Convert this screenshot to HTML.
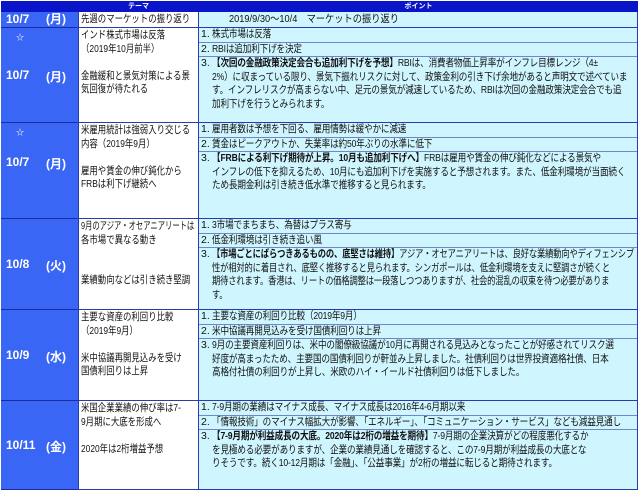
<!DOCTYPE html>
<html><head><meta charset="utf-8"><style>
*{margin:0;padding:0;box-sizing:border-box}
body{width:640px;height:493px;background:#fff;font-family:"Liberation Sans","Noto Sans CJK JP",sans-serif;position:relative;overflow:hidden;color:#111}
.a{position:absolute;overflow:hidden}
.hd{background:#0a14c8;color:#fff;font-size:7px;font-weight:bold;text-align:center;line-height:11px;top:1px;height:11px}
.dt{background:#3a66f5;left:1px;width:77px;border-bottom:1px solid #1a2aa0;color:#fff;font-weight:bold;font-size:12px}
.dt .d{position:absolute;left:5px}
.dt .w{position:absolute;left:45px}
.dt .s{position:absolute;left:15px;top:4px;font-size:8px;font-weight:normal}
.th{background:#fff;left:78px;width:121px;border:1px solid #2a3ab0;border-top:none;font-size:10.5px;line-height:13.5px;padding:1px 2px;white-space:nowrap}
.th .in{display:block;width:150px;transform:scaleX(0.8);transform-origin:0 0}
.pt{background:#cff6ff;left:199px;width:439px;border-bottom:1px solid #2a3ab0;border-right:1px solid #2a3ab0;font-size:10.5px;line-height:13.5px}
.it{border-bottom:1px solid #6f86cc;white-space:nowrap;position:relative;padding-left:13px}
.it:last-child{border-bottom:none}
.it .n{position:absolute;left:2px}
.it .in{display:block;width:540px;transform:scaleX(0.82);transform-origin:0 0;letter-spacing:-0.2px}
b{font-weight:bold}
</style></head><body>
<div class="a hd" style="left:1px;width:77px"></div>
<div class="a hd" style="left:78px;width:121px">テーマ</div>
<div class="a hd" style="left:199px;width:439px">ポイント</div>

<div class="a dt" style="top:12px;height:16px;line-height:15px"><span class="d">10/7</span><span class="w">(月)</span></div>
<div class="a th" style="top:12px;height:16px"><span class="in">先週のマーケットの振り返り</span></div>
<div class="a pt" style="top:12px;height:16px;padding-left:30px;line-height:15px"><span style="display:block;width:300px;transform:scaleX(0.88);transform-origin:0 0">2019/9/30～10/4　マーケットの振り返り</span></div>

<div class="a dt" style="top:28px;height:95px"><span class="s">☆</span><span class="d" style="top:40px">10/7</span><span class="w" style="top:40px">(月)</span></div>
<div class="a th" style="top:28px;height:95px"><span class="in">インド株式市場は反落<br>（2019年10月前半）<br><br>金融緩和と景気対策による景<br>気回復が待たれる</span></div>
<div class="a pt" style="top:28px;height:95px">
<div class="it"><span class="n">1.</span><span class="in">株式市場は反落</span></div>
<div class="it"><span class="n">2.</span><span class="in">RBIは追加利下げを決定</span></div>
<div class="it"><span class="n">3.</span><span class="in"><b>【次回の金融政策決定会合も追加利下げを予想】</b>RBIは、消費者物価上昇率がインフレ目標レンジ（4±<br>2%）に収まっている限り、景気下振れリスクに対して、政策金利の引き下げ余地があると声明文で述べていま<br>す。インフレリスクが高まらない中、足元の景気が減速しているため、RBIは次回の金融政策決定会合でも追<br>加利下げを行うとみられます。</span></div>
</div>

<div class="a dt" style="top:123px;height:96px"><span class="s">☆</span><span class="d" style="top:32px">10/7</span><span class="w" style="top:32px">(月)</span></div>
<div class="a th" style="top:123px;height:96px"><span class="in">米雇用統計は強弱入り交じる<br>内容（2019年9月）<br><br>雇用や賃金の伸び鈍化から<br>FRBは利下げ継続へ</span></div>
<div class="a pt" style="top:123px;height:96px">
<div class="it"><span class="n">1.</span><span class="in">雇用者数は予想を下回る、雇用情勢は緩やかに減速</span></div>
<div class="it"><span class="n">2.</span><span class="in">賃金はピークアウトか、失業率は約50年ぶりの水準に低下</span></div>
<div class="it"><span class="n">3.</span><span class="in"><b>【FRBによる利下げ期待が上昇。10月も追加利下げへ】</b>FRBは雇用や賃金の伸び鈍化などによる景気や<br>インフレの低下を抑えるため、10月にも追加利下げを実施すると予想されます。また、低金利環境が当面続く<br>ため長期金利は引き続き低水準で推移すると見られます。</span></div>
</div>

<div class="a dt" style="top:219px;height:91px"><span class="d" style="top:38px">10/8</span><span class="w" style="top:38px">(火)</span></div>
<div class="a th" style="top:219px;height:91px"><span class="in"><span style="display:inline-block;transform:scaleX(0.87);transform-origin:0 0;white-space:nowrap">9月のアジア・オセアニアリートは</span><br>各市場で異なる動き<br><br><br>業績動向などは引き続き堅調</span></div>
<div class="a pt" style="top:219px;height:91px">
<div class="it"><span class="n">1.</span><span class="in">3市場でまちまち、為替はプラス寄与</span></div>
<div class="it"><span class="n">2.</span><span class="in">低金利環境は引き続き追い風</span></div>
<div class="it"><span class="n">3.</span><span class="in" style="transform:scaleX(0.79)"><b>【市場ごとにばらつきあるものの、底堅さは維持】</b>アジア・オセアニアリートは、良好な業績動向やディフェンシブ<br>性が相対的に着目され、底堅く推移すると見られます。シンガポールは、低金利環境を支えに堅調さが続くと<br>期待されます。香港は、リートの価格調整は一段落しつつありますが、社会的混乱の収束を待つ必要がありま<br>す。</span></div>
</div>

<div class="a dt" style="top:310px;height:91px"><span class="d" style="top:38px">10/9</span><span class="w" style="top:38px">(水)</span></div>
<div class="a th" style="top:310px;height:91px"><span class="in">主要な資産の利回り比較<br>（2019年9月）<br><br>米中協議再開見込みを受け<br>国債利回りは上昇</span></div>
<div class="a pt" style="top:310px;height:91px">
<div class="it"><span class="n">1.</span><span class="in">主要な資産の利回り比較（2019年9月）</span></div>
<div class="it"><span class="n">2.</span><span class="in">米中協議再開見込みを受け国債利回りは上昇</span></div>
<div class="it"><span class="n">3.</span><span class="in">9月の主要資産利回りは、米中の閣僚級協議が10月に再開される見込みとなったことが好感されてリスク選<br>好度が高まったため、主要国の国債利回りが軒並み上昇しました。社債利回りは世界投資適格社債、日本<br>高格付社債の利回りが上昇し、米欧のハイ・イールド社債利回りは低下しました。</span></div>
</div>

<div class="a dt" style="top:401px;height:89px"><span class="d" style="top:37px">10/11</span><span class="w" style="top:37px">(金)</span></div>
<div class="a th" style="top:401px;height:89px"><span class="in">米国企業業績の伸び率は7-<br>9月期に大底を形成へ<br><br>2020年は2桁増益予想</span></div>
<div class="a pt" style="top:401px;height:89px">
<div class="it"><span class="n">1.</span><span class="in">7-9月期の業績はマイナス成長、マイナス成長は2016年4-6月期以来</span></div>
<div class="it"><span class="n">2.</span><span class="in">「情報技術」のマイナス幅拡大が影響、「エネルギー」、「コミュニケーション・サービス」なども減益見通し</span></div>
<div class="it"><span class="n">3.</span><span class="in"><b>【7-9月期が利益成長の大底。2020年は2桁の増益を期待】</b>7-9月期の企業決算がどの程度悪化するか<br>を見極める必要がありますが、企業の業績見通しを確認すると、この7-9月期が利益成長の大底とな<br>りそうです。続く10-12月期は「金融」、「公益事業」が2桁の増益に転じると期待されます。</span></div>
</div>
</body></html>
